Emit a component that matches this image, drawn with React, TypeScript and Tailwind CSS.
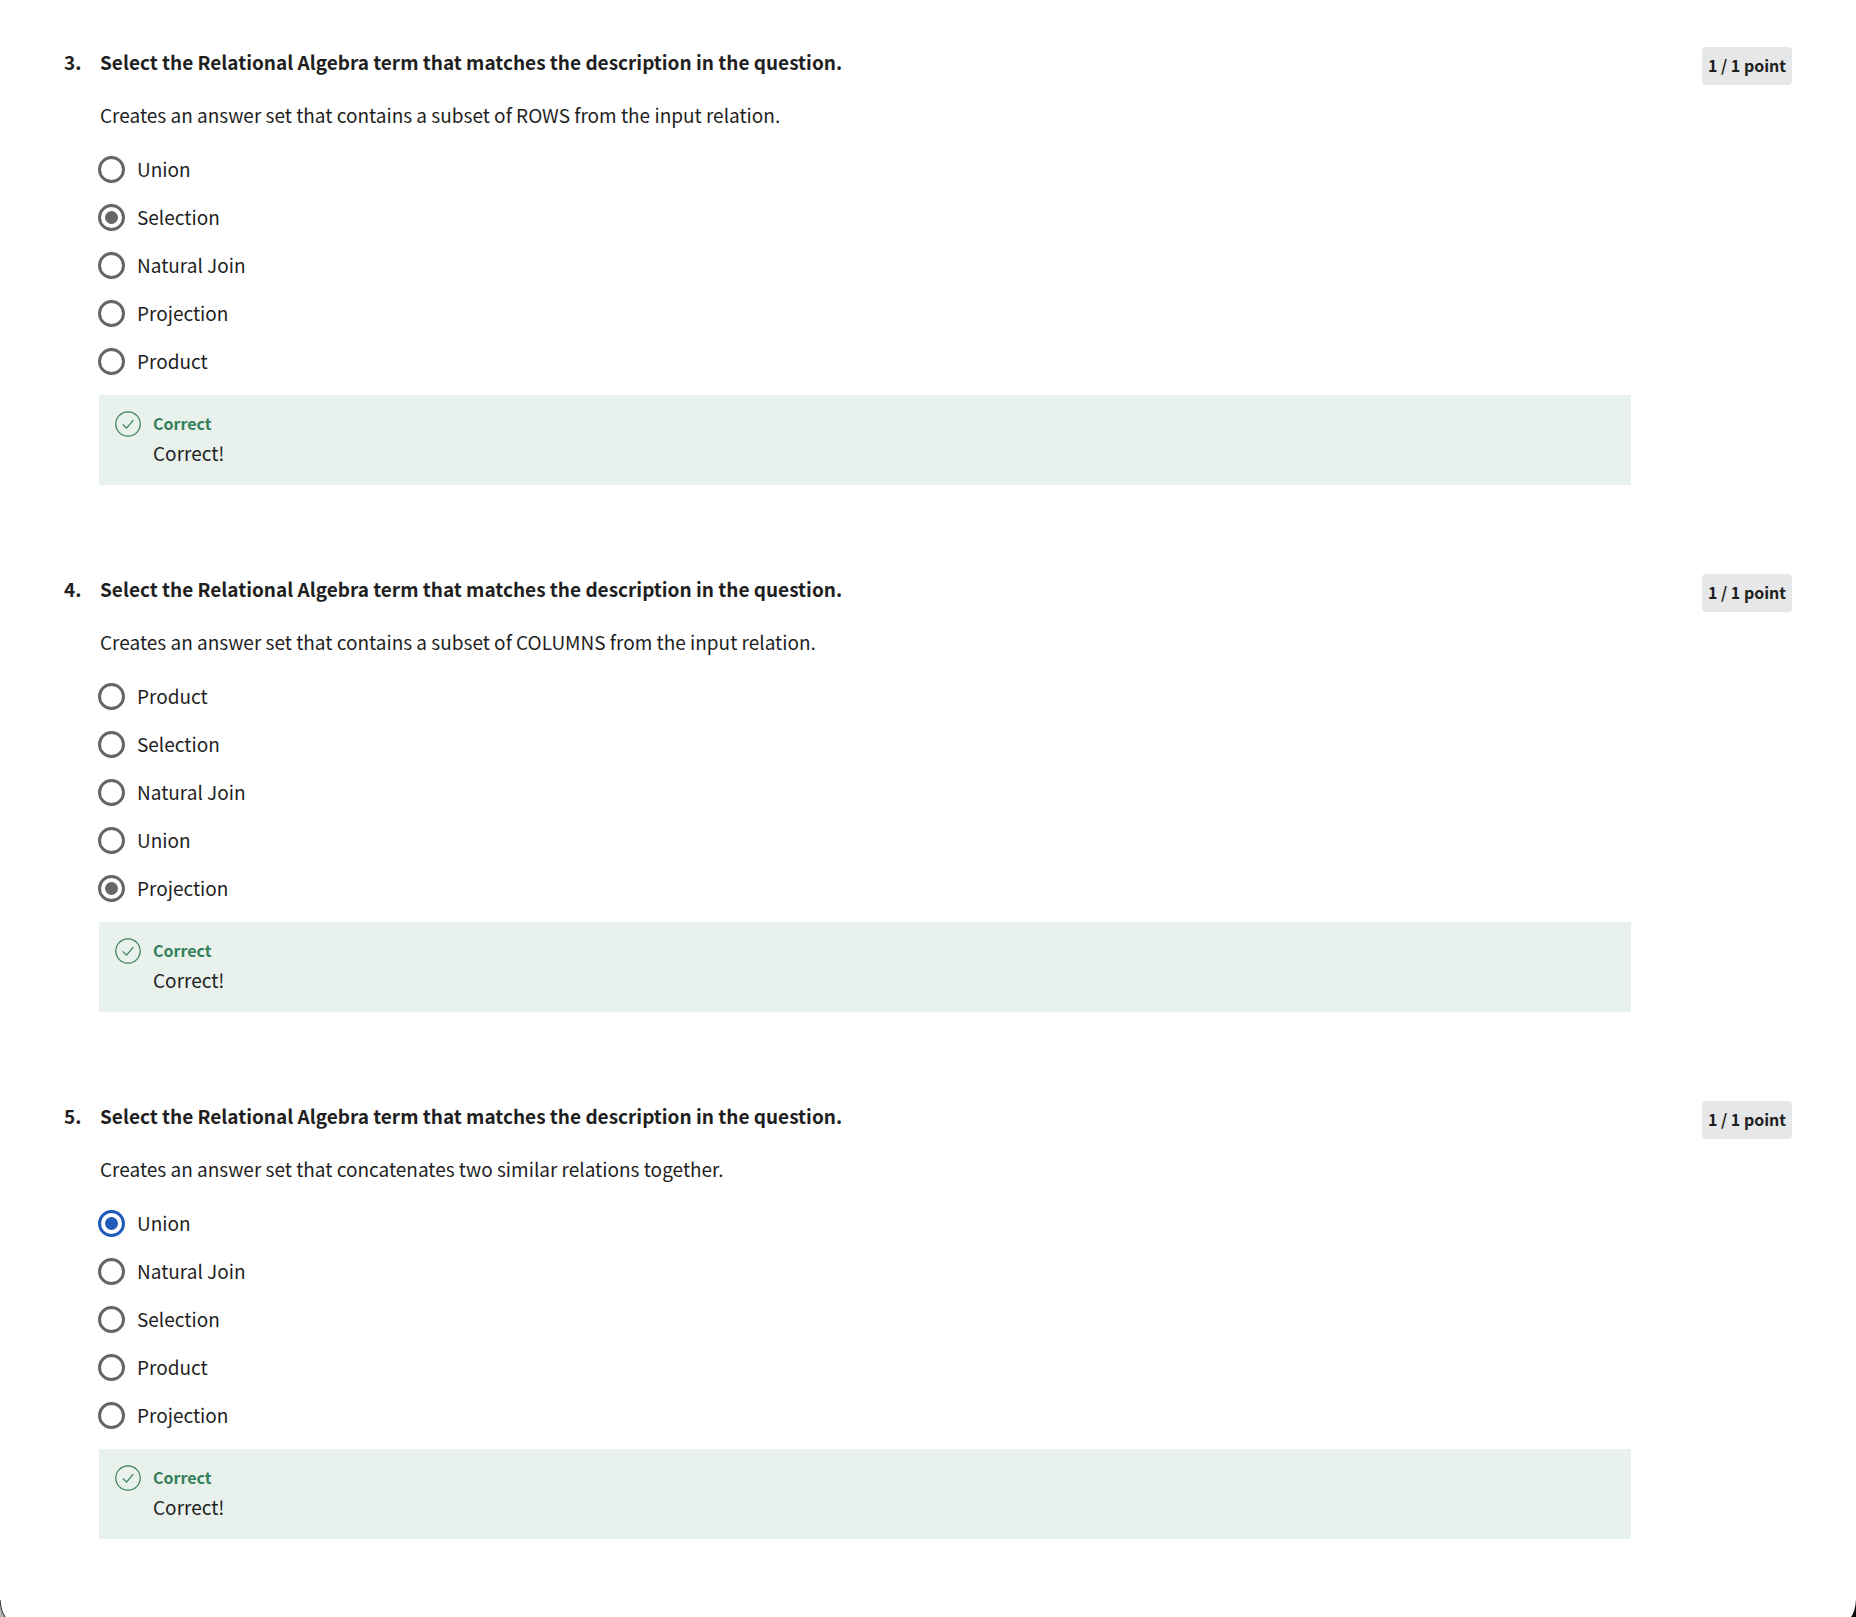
const questions = [
  {
    number: 3,
    description: "Creates an answer set that contains a subset of ROWS from the input relation.",
    options: ["Union", "Selection", "Natural Join", "Projection", "Product"],
    selected: 1,
    active: false,
  },
  {
    number: 4,
    description: "Creates an answer set that contains a subset of COLUMNS from the input relation.",
    options: ["Product", "Selection", "Natural Join", "Union", "Projection"],
    selected: 4,
    active: false,
  },
  {
    number: 5,
    description: "Creates an answer set that concatenates two similar relations together.",
    options: ["Union", "Natural Join", "Selection", "Product", "Projection"],
    selected: 0,
    active: true,
  },
];

function CheckCircle() {
  return (
    <svg viewBox="0 0 26 26" className="size-[26px] shrink-0" fill="none" stroke="#35805a" strokeWidth="1.2" aria-hidden="true">
      <circle cx="13" cy="13" r="12.2" />
      <path d="M7.8 13.3l3.7 3.8 6.8-8" />
    </svg>
  );
}

function Question({ q }: { q: (typeof questions)[number] }) {
  const radioColor = q.active
    ? "border-[#666666] checked:border-[#1f5bb8] checked:bg-[#1f5bb8]"
    : "border-[#666666] checked:bg-[#666666]";
  return (
    <section className="flex items-start">
      <div className="w-9 shrink-0 text-[19px] leading-8 font-bold">{q.number}.</div>
      <div className="grow">
        <h2 className="text-[19px] leading-8 font-bold">
          Select the Relational Algebra term that matches the description in the question.
        </h2>
        <p className="mt-[21px] text-[19px] leading-8">{q.description}</p>
        <fieldset className="mt-[14px]" aria-label={`Question ${q.number}`}>
          {q.options.map((option, i) => (
            <label key={option} className="flex h-12 items-center text-[19px] leading-8">
              <input
                type="radio"
                name={`question-${q.number}`}
                defaultChecked={i === q.selected}
                className={`mr-3 -ml-0.5 size-[27px] appearance-none rounded-full border-3 checked:bg-clip-content checked:p-1 ${radioColor}`}
              />
              {option}
            </label>
          ))}
        </fieldset>
        <div className="mt-[10px] -ml-px flex gap-3 bg-[#e9f1ec] p-4">
          <CheckCircle />
          <div>
            <div className="mb-0.5 text-[16px] leading-6 font-bold text-[#35805a]">Correct</div>
            <div className="text-[19px] leading-8">Correct!</div>
          </div>
        </div>
      </div>
      <div className="mt-px ml-[71px] w-[90px] shrink-0 rounded bg-[#e5e7e8] pb-0.5 text-center text-[16px] leading-9 font-bold">
        1 / 1 point
      </div>
    </section>
  );
}

/* Rounded bottom corners of the window, with the desktop showing behind. */
function WindowCorners() {
  return (
    <div className="pointer-events-none absolute inset-x-0 bottom-0 flex justify-between" aria-hidden="true">
      <svg viewBox="0 0 6 18" className="h-[18px] w-[6px]">
        <path d="M0 4Q0.6 12 5 18H0Z" fill="#b5b5b5" />
        <path d="M0 1Q0.8 12 5 18" fill="none" stroke="#333333" strokeWidth="1.1" />
      </svg>
      <svg viewBox="0 0 6 18" className="h-[18px] w-[6px]">
        <path d="M6 0Q5.4 12 1 18H6Z" fill="#0d0a0a" />
      </svg>
    </div>
  );
}

export default function App() {
  return (
    <main className="relative flex min-h-screen flex-col gap-[88px] bg-white px-16 pt-[46px] font-['Noto_Sans_CJK_SC',sans-serif] text-[#1f1f1f]">
      {questions.map((q) => (
        <Question key={q.number} q={q} />
      ))}
      <WindowCorners />
    </main>
  );
}
